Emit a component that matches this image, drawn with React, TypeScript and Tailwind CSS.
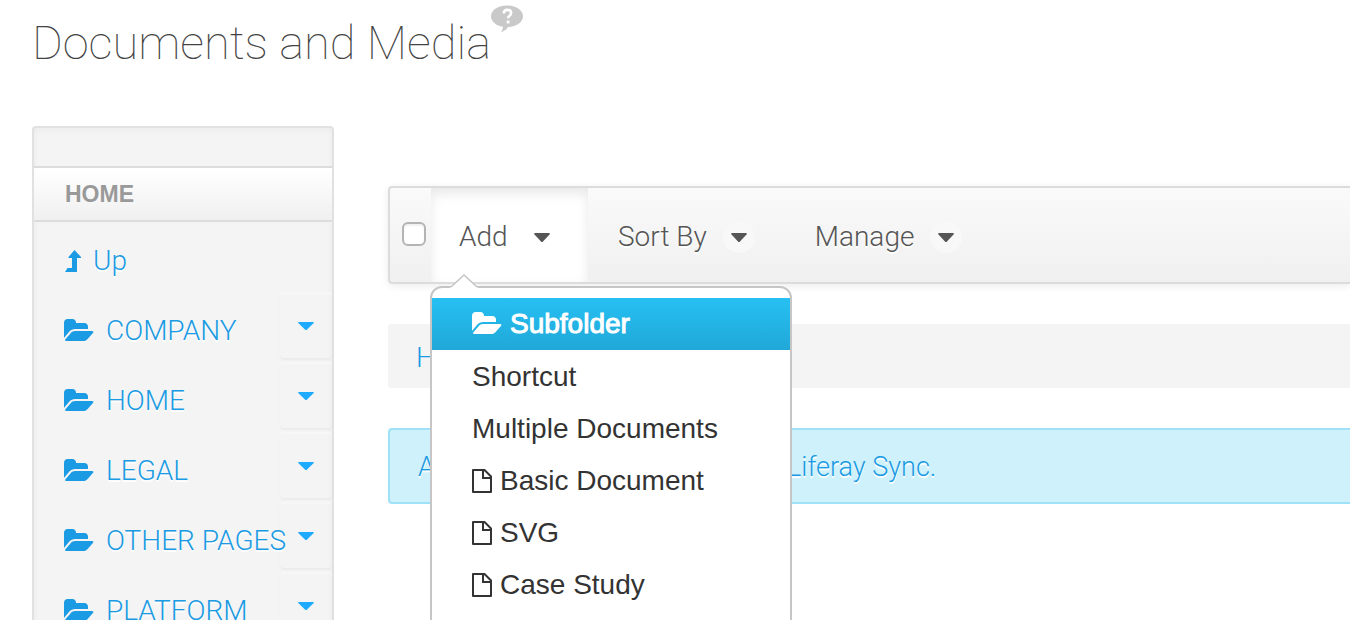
import React from "react";

function FolderOpenIcon() {
  return (
    <svg viewBox="0 0 1920 1792" className="h-7 w-[30px] shrink-0" fill="currentColor" aria-hidden="true">
      <path d="M1879 952q0 31-31 66l-336 396q-43 51-120.5 86.5t-143.5 35.5h-1088q-34 0-60.5-13t-26.5-43q0-31 31-66l336-396q43-51 120.5-86.5t143.5-35.5h1088q34 0 60.5 13t26.5 43zm-343-344v160h-832q-94 0-197 47.5t-164 119.5l-337 396-5 6q0-4-.5-12.5t-.5-12.5v-960q0-92 66-158t158-66h320q92 0 158 66t66 158v32h544q92 0 158 66t66 158z" />
    </svg>
  );
}

function FileIcon() {
  return (
    <svg viewBox="0 0 20 24" className="h-6 w-5 shrink-0" fill="none" stroke="currentColor" strokeWidth="2" strokeLinejoin="round" aria-hidden="true">
      <path d="M1 1h11.5L19 7.500V23H1z" />
      <path d="M11 1v8h8" strokeLinejoin="miter" />
    </svg>
  );
}

function LevelUpIcon() {
  return (
    <svg viewBox="0 0 16 22" className="h-[22px] w-4 shrink-0" fill="currentColor" aria-hidden="true">
      <path d="M9.500 0 16 7v1h-4V22H0l2.500-4H7V8H3.500V7z" />
    </svg>
  );
}

function Caret({ className }: { className: string }) {
  return (
    <svg viewBox="0 0 18 10" preserveAspectRatio="none" className={className} fill="currentColor" aria-hidden="true">
      <path d="M.800 0h16.400l.8 1-8.400 9H8.400L0 1z" />
    </svg>
  );
}

function HelpBubble() {
  return (
    <svg viewBox="0 0 32 28" className="h-7 w-8" aria-hidden="true">
      <path d="M16 .500C7.200.500 0 5 0 11.200c0 5.200 5 9.600 12 10.600-.2 2-.8 4.200-2 5.400 3.300-.8 5.800-3 7-5.200C25.500 21.700 32 17 32 11.200 32 5 24.800.500 16 .500z" fill="#c9c9c9" />
      <path d="M12.800 8.600c0-2.400 1.600-3.700 3.700-3.700s3.600 1.300 3.600 3.200c0 2.700-3 2.700-3 5.200" fill="none" stroke="#fff" strokeWidth="2.600" />
      <rect x="15.700" y="15.600" width="2.800" height="2.800" fill="#fff" />
    </svg>
  );
}

const folders = ["COMPANY", "HOME", "LEGAL", "OTHER PAGES", "PLATFORM"];
const documentTypes = ["Basic Document", "SVG", "Case Study"];

function Sidebar() {
  return (
    <nav aria-label="Folders" className="mt-[58px] w-[302px] shrink-0 rounded-t border-2 border-[#e1e1e1] bg-[#f4f4f4] pt-[38px] text-[#1b9be3] shadow-[inset_0_2px_6px_rgba(0,0,0,0.04)]">
      <h2 className="mb-1 flex h-14 items-center border-y-2 border-[#dcdcdc] bg-linear-to-b from-white to-[#f0f0f0] px-[31px] font-[Liberation_Sans,sans-serif] text-[23px] font-bold text-[#999]">
        HOME
      </h2>
      <a href="#up" className="flex h-[70px] items-center gap-3 pl-[31px] [text-shadow:0_2px_0_#fff]">
        <LevelUpIcon />
        Up
      </a>
      <ul>
        {folders.map((name) => (
          <li key={name} className="flex h-[70px] items-center pl-[30px]">
            <a href={"#" + name.toLowerCase().replace(" ", "-")} className="flex flex-1 items-center gap-3 whitespace-nowrap [text-shadow:0_2px_0_#fff]">
              <FolderOpenIcon />
              {name}
            </a>
            <button type="button" aria-label={"Expand " + name} className="-ml-8 mb-3 flex h-[66px] w-[52px] shrink-0 items-center justify-center rounded border-t-2 border-[#f7f7f7] text-[#1eaaff] shadow-[0_2px_2px_rgba(0,0,0,0.04)]">
              <Caret className="h-2 w-4" />
            </button>
          </li>
        ))}
      </ul>
    </nav>
  );
}

function AddMenu() {
  return (
    <div className="absolute -left-px top-[98px] z-10 w-[362px] rounded-t-xl border-2 border-[#c6c6c6] bg-white pt-2.5 font-[Liberation_Sans,sans-serif] text-[28px] font-normal text-[#333]">
      <svg viewBox="0 0 28 14" className="absolute -top-3.5 left-[18px] h-3.5 w-7" aria-hidden="true">
        <path d="M0 14 14 1l14 13z" fill="#fff" />
        <path d="M1 13 14 1l13 12" fill="none" stroke="#c6c6c6" strokeWidth="1.500" />
      </svg>
      <ul className="min-h-screen">
        <li>
          <a href="#subfolder" className="flex h-13 items-center gap-2 bg-linear-to-b from-[#27c0f3] to-[#20a8d8] pl-10 text-white [-webkit-text-stroke:1px_white]">
            <FolderOpenIcon />
            Subfolder
          </a>
        </li>
        <li>
          <a href="#shortcut" className="flex h-13 items-center pl-10 pt-0.5">Shortcut</a>
        </li>
        <li>
          <a href="#multiple" className="flex h-13 items-center pl-10 pt-0.5">Multiple Documents</a>
        </li>
        {documentTypes.map((name) => (
          <li key={name}>
            <a href="#document" className="flex h-13 items-center gap-2 pl-10 pt-0.5">
              <FileIcon />
              {name}
            </a>
          </li>
        ))}
      </ul>
    </div>
  );
}

function ToolbarButton({ label }: { label: string }) {
  return (
    <button type="button" className="flex items-center gap-4 px-[30px] pt-1 [text-shadow:0_2px_0_#fff]">
      {label}
      <span className="-mr-3 flex size-8 items-center justify-center rounded-full bg-[#f8f8f8]">
        <Caret className="h-[9px] w-4" />
      </span>
    </button>
  );
}

function Toolbar() {
  return (
    <div className="flex h-[98px] rounded-l border-2 border-r-0 border-[#dcdcdc] bg-linear-to-b from-[#fafafa] to-[#f0f0f0] text-[#555] shadow-[0_2px_8px_rgba(0,0,0,0.08)]">
      <div className="flex w-[41px] items-center pb-0.5 pl-3">
        <input type="checkbox" aria-label="Select all" className="size-6 appearance-none rounded-md border-2 border-[#b4b4b4] bg-white shadow-[inset_0_2px_2px_rgba(0,0,0,0.06)]" />
      </div>
      <div className="relative flex">
        <button type="button" aria-expanded="true" className="flex w-[157px] items-center gap-[26px] bg-white pl-7 pt-1 shadow-[inset_0_6px_12px_rgba(0,0,0,0.09)]">
          Add
          <Caret className="h-[9px] w-4" />
        </button>
        <AddMenu />
      </div>
      <div className="flex gap-3">
        <ToolbarButton label="Sort By" />
        <ToolbarButton label="Manage" />
      </div>
    </div>
  );
}

export default function App() {
  return (
    <div className="h-screen overflow-hidden bg-white pl-8 font-[Roboto,sans-serif] text-[28px] font-light">
      <header className="flex h-[68px] items-start pt-1">
        <h1 className="pt-[9px] text-[47px] font-thin leading-[60px] text-[#444]">Documents and Media</h1>
        <button type="button" aria-label="Help" className="mt-px">
          <HelpBubble />
        </button>
      </header>
      <div className="flex gap-[54px]">
        <Sidebar />
        <main className="min-w-0 flex-1 pt-[118px]">
          <Toolbar />
          <div className="mt-10 flex h-16 items-center rounded-l bg-[#f4f4f4] px-7 pt-1 text-[#1b9be3]">
            <a href="#home">Home</a>
          </div>
          <div className="mt-10 flex h-[76px] items-center rounded-l border-2 border-r-0 border-[#9fe1f6] bg-[#cff1fb] px-7 pt-0.5 text-[27px] text-[#1b9be3] [text-shadow:0_2px_0_#fff]">
            <a href="#sync">Access these files offline using Liferay Sync.</a>
          </div>
        </main>
      </div>
    </div>
  );
}
